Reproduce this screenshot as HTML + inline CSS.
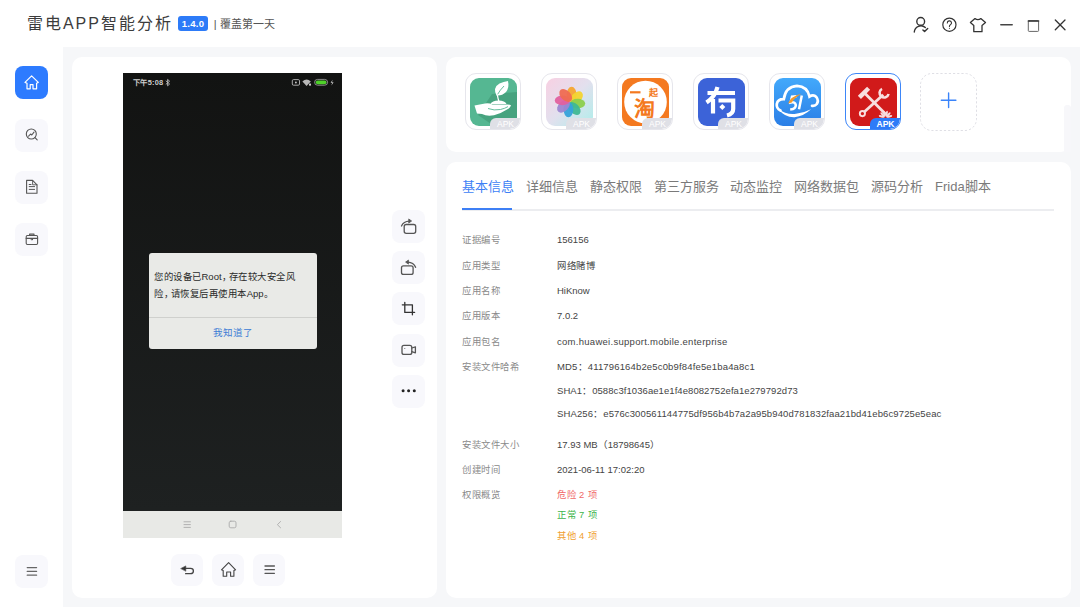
<!DOCTYPE html>
<html lang="zh-CN"><head><meta charset="utf-8">
<style>
*{box-sizing:border-box;margin:0;padding:0}
html,body{width:1080px;height:607px;overflow:hidden;background:#fff;font-family:"Liberation Sans",sans-serif;color:#333}
.abs{position:absolute}
#title{left:27px;top:13px;font-size:16px;letter-spacing:1.95px;color:#3c3c3c;line-height:22px;white-space:nowrap}
#badge{left:178px;top:16.4px;width:30px;height:15px;background:#2d7bf8;border-radius:3px;color:#fff;font-size:9.5px;font-weight:bold;letter-spacing:0.3px;line-height:15px;text-align:center}
#sub{left:213.8px;top:16px;font-size:11px;color:#555;line-height:16px;white-space:nowrap}
#bg{left:63px;top:47px;width:1017px;height:560px;background:#f6f7f9}
.panel{background:#fff;border-radius:10px}
.sb{left:15px;width:33px;height:33px;border-radius:8px;background:#f8f8fc}
.sb svg{position:absolute;left:0;top:0}
.tb{left:392px;width:33px;height:33px;border-radius:8px;background:#f8f8fc}
.tb svg,.bb svg{position:absolute;left:0;top:0}
.bb{top:554px;width:32px;height:32px;border-radius:8px;background:#f8f8fc}
.card{top:73px;width:56px;height:57px;border:1px solid #e6e6ec;border-radius:11px;background:#fff;overflow:hidden}
.icon{position:absolute;left:4px;top:4px;width:47px;height:48px;border-radius:9px;overflow:hidden}
.apk{position:absolute;right:0;bottom:0;width:30px;height:11.5px;background:#dfe0e6;border-radius:6px 0 10px 0;color:#fff;font-size:8.5px;line-height:12px;text-align:center;padding-left:1px}
.tab{top:178px;font-size:13px;color:#7a7a7a;line-height:18px;white-space:nowrap}
.lab{left:462px;font-size:9.4px;letter-spacing:0.5px;color:#8a8a8a;line-height:12px;white-space:nowrap}
.val{left:557px;font-size:9.5px;color:#444;line-height:12px;white-space:nowrap}
</style></head><body>
<div id="title" class="abs">雷电APP智能分析</div>
<div id="badge" class="abs">1.4.0</div>
<div id="sub" class="abs">|&nbsp;覆盖第一天</div>

<div id="bg" class="abs"></div>
<div class="abs panel" style="left:72px;top:57px;width:365px;height:541px"></div>
<div class="abs panel" style="left:446px;top:57px;width:625px;height:95px"></div>
<div class="abs panel" style="left:446px;top:162px;width:625px;height:436px"></div>

<div class="abs" style="left:1064px;top:105px;width:7px;height:47px;background:#f7f7fa;border-radius:3px 3px 0 0"></div>
<!-- sidebar -->
<div class="abs sb" style="top:66px;background:#2d7bff"></div>
<div class="abs sb" style="top:119px"></div>
<div class="abs sb" style="top:171px"></div>
<div class="abs sb" style="top:223px"></div>
<div class="abs sb" style="top:555px"></div>

<!-- phone -->
<div class="abs" style="left:123px;top:73px;width:219px;height:438px;background:linear-gradient(#121312,#1e2121)"></div>
<div class="abs" style="left:123px;top:511px;width:219px;height:27px;background:#e8e9e6"></div>
<div class="abs" style="left:148.5px;top:253px;width:168px;height:96px;background:#e9eae7;border-radius:3px"></div>


<div class="abs" style="left:133.3px;top:77.5px;font-size:7.4px;font-weight:bold;color:#cfcfcf;line-height:10px;white-space:nowrap;letter-spacing:0.2px">下午5:08</div>
<svg class="abs" style="left:0;top:0" width="1080" height="607" viewBox="0 0 1080 607" fill="none">
<path d="M165.8 80.8 L169.6 84 L167.6 85.8 V79.4 L169.6 81.2 L165.8 84.4" stroke="#bbb" stroke-width="0.9"/>
<rect x="292.3" y="79.6" width="7.2" height="5.6" rx="1.2" stroke="#bbb" stroke-width="0.9"/>
<circle cx="295.9" cy="82.5" r="0.9" fill="#ccc"/>
<path d="M302.4 81.4 Q306.6 77.4 310.8 81.4 L306.6 86 Z" fill="#b8b8b8"/>
<rect x="309" y="83.6" width="2" height="2" fill="#ccc"/>
<rect x="314.6" y="79.4" width="13" height="5.8" rx="2.9" stroke="#aaa" stroke-width="0.8"/>
<rect x="315.8" y="80.4" width="10.6" height="3.8" rx="1.9" fill="#4fd12a"/>
<path d="M332.6 79.8 L330.6 82.8 H332.2 L331.4 85.4 L333.6 82.2 H332 Z" fill="#ccc"/>
</svg>
<div class="abs" style="left:154px;top:268.4px;width:170px;font-size:9.4px;letter-spacing:0.5px;color:#2a2a2a;line-height:17px;white-space:nowrap">您的设备已<span style="font-size:9.5px;letter-spacing:0">Root</span><span style="letter-spacing:-1.8px">，</span>存在较大安全风<br>险<span style="letter-spacing:-1.8px">，</span>请恢复后再使用本<span style="font-size:9.5px;letter-spacing:0">App</span>。</div>
<div class="abs" style="left:148.5px;top:317px;width:168px;height:1px;background:#cfd0cd"></div>
<div class="abs" style="left:148.5px;top:326px;width:168px;text-align:center;font-size:9.5px;color:#3a7bd5;line-height:14px">我知道了</div>

<!-- tool buttons -->
<div class="abs tb" style="top:210px"></div>
<div class="abs tb" style="top:251px"></div>
<div class="abs tb" style="top:292px"></div>
<div class="abs tb" style="top:334px"></div>
<div class="abs tb" style="top:375px"></div>

<div class="abs bb" style="left:171px"></div>
<div class="abs bb" style="left:212px"></div>
<div class="abs bb" style="left:253px"></div>

<!-- app cards -->
<div class="abs card" style="left:465px"><div class="icon">
<svg width="47" height="48" viewBox="0 0 47 48">
<rect width="47" height="48" fill="#55b792"/>
<path d="M22 16 L47 14 V48 H24 L8 37 Z" fill="#47a37f"/>
<path d="M26.5 17.5 Q22.5 9.5 29.5 5.5 Q33.5 3.5 38 3 Q39.5 9.5 36 14 Q32 18 26.5 17.5 Z" fill="#fff"/>
<path d="M27.5 16.5 Q30 12 34 8" stroke="#55b792" stroke-width="0.9" fill="none"/>
<path d="M27.3 16.5 Q27.8 20 28.8 23" stroke="#fff" stroke-width="1.3" fill="none"/>
<path d="M20.5 26 Q22 22.5 28.5 22.5 Q35 22.5 36.5 26 Z" fill="#fff"/>
<path d="M4.5 27.5 L15 25.5 Q19 24.8 22.5 26.5 L36 26.5 Q39.5 26.3 41 27.2 Q40.5 29.5 37 31.5 Q31 35.5 24 37.2 Q17 38.5 12 36 L7 35.5 Z" fill="#fff"/>
<path d="M18 30.5 Q24 32.8 30.5 31.5 Q35 30.5 38 28.6" stroke="#55b792" stroke-width="0.9" fill="none"/>
</svg></div><div class="apk">APK</div></div>
<div class="abs card" style="left:541px"><div class="icon">
<svg width="47" height="48" viewBox="0 0 47 48">
<defs><linearGradient id="g2" x1="0" y1="0" x2="1" y2="1"><stop offset="0" stop-color="#f8d0e2"/><stop offset="0.5" stop-color="#e2e0ee"/><stop offset="1" stop-color="#aeeeea"/></linearGradient></defs>
<rect width="47" height="48" fill="url(#g2)"/>
<g transform="translate(24 24)"><ellipse cx="1.6" cy="-7.6" rx="4.9" ry="7.6" fill="#f6a531" opacity="0.95" transform="rotate(0)"/><ellipse cx="1.6" cy="-7.6" rx="4.9" ry="7.6" fill="#f3d42f" opacity="0.95" transform="rotate(45)"/><ellipse cx="1.6" cy="-7.6" rx="4.9" ry="7.6" fill="#8ccf4d" opacity="0.95" transform="rotate(90)"/><ellipse cx="1.6" cy="-7.6" rx="4.9" ry="7.6" fill="#3fb894" opacity="0.95" transform="rotate(135)"/><ellipse cx="1.6" cy="-7.6" rx="4.9" ry="7.6" fill="#36a2da" opacity="0.95" transform="rotate(180)"/><ellipse cx="1.6" cy="-7.6" rx="4.9" ry="7.6" fill="#9c86d2" opacity="0.95" transform="rotate(225)"/><ellipse cx="1.6" cy="-7.6" rx="4.9" ry="7.6" fill="#e2609f" opacity="0.95" transform="rotate(270)"/><ellipse cx="1.6" cy="-7.6" rx="4.9" ry="7.6" fill="#ef6b52" opacity="0.95" transform="rotate(315)"/></g>
</svg></div><div class="apk">APK</div></div>
<div class="abs card" style="left:617px"><div class="icon">
<svg width="47" height="48" viewBox="0 0 47 48">
<rect width="47" height="48" fill="#f47920"/>
<circle cx="23.5" cy="24" r="21.3" fill="#fff"/>
<rect x="8" y="13.2" width="10.5" height="2.2" fill="#f47920"/>
<text x="31" y="17.5" font-size="9" font-weight="bold" fill="#f47920" text-anchor="middle">起</text>
<text x="22" y="37.5" font-size="21" font-weight="bold" fill="#f47920" text-anchor="middle">淘</text>
</svg></div><div class="apk">APK</div></div>
<div class="abs card" style="left:693px"><div class="icon">
<svg width="47" height="48" viewBox="0 0 47 48">
<rect width="47" height="48" fill="#3c63d8"/>
<path d="M9.5 15 H37" stroke="#fff" stroke-width="4.2"/>
<path d="M19.5 9 Q17 19 8.5 24.5" stroke="#fff" stroke-width="4.2" fill="none"/>
<path d="M15 21 V35.5" stroke="#fff" stroke-width="4.2"/>
<path d="M20.5 22.5 H35.2 V31 Q35.2 36 29 37.5" stroke="#fff" stroke-width="4.2" fill="none"/>
<path d="M24.3 26 L27.3 29 L24.3 32 L21.3 29 Z" fill="#fff"/>
</svg></div><div class="apk">APK</div></div>
<div class="abs card" style="left:769px"><div class="icon">
<svg width="47" height="48" viewBox="0 0 47 48">
<defs><linearGradient id="g5" x1="0" y1="0" x2="0" y2="1"><stop offset="0" stop-color="#43a9fb"/><stop offset="1" stop-color="#2b7ee6"/></linearGradient></defs>
<rect width="47" height="48" fill="url(#g5)"/>
<path d="M6.5 32.5 Q2.2 30.5 2.8 26 Q3.8 21 9.8 21.2 Q11.5 8.5 23 7.8 Q33.5 8.3 35.5 18.6 Q39.5 16 42.3 19 Q45 22.5 42.8 26 Q41 28.3 38 27.8" stroke="#fff" stroke-width="2.7" fill="none" stroke-linecap="round"/>
<path d="M4.5 31 Q12 37 22 35.8 Q30 34.8 37 31.2 Q30 38 20.5 39.2 Q10.5 39.5 4.5 31 Z" fill="#fff"/>
<path d="M22.5 18.2 L18 18.6 L16.6 24.6 Q21.2 23.4 21.8 27 Q22 31 16.2 31.6 M27.8 17.4 L25 31.2" stroke="#fff" stroke-width="2.5" fill="none"/>
<path d="M14 25.5 Q16.5 18.5 27.5 15.8 Q20.5 19.8 17.8 24.6 Z" fill="#f39a2d"/>
</svg></div><div class="apk">APK</div></div>
<div class="abs card" style="left:845px;border-color:#3d86f8"><div class="icon">
<svg width="47" height="48" viewBox="0 0 47 48">
<rect width="47" height="48" fill="#d11a1a"/>
<g stroke="#f8dede" fill="none" stroke-linecap="butt">
<path d="M14.5 15 L36 36.5" stroke-width="2.8"/>
<rect x="-6.5" y="-2.2" width="13" height="4.4" fill="#f8dede" stroke="none" transform="translate(14 14.8) rotate(-45)"/>
<path d="M33.2 16.8 L14.2 34" stroke-width="2.8"/>
<circle cx="12.4" cy="35.6" r="2.6" stroke-width="1.9" fill="#d11a1a"/>
<path d="M32 10.8 A4.6 4.6 0 1 0 38.6 16" stroke-width="2.6"/>
</g>
<g fill="#f8dede" transform="translate(35.5 39.5)">
<ellipse cx="0" cy="-4" rx="1.1" ry="3" transform="rotate(-75)"/>
<ellipse cx="0" cy="-4" rx="1.1" ry="3" transform="rotate(-45)"/>
<ellipse cx="0" cy="-4" rx="1.1" ry="3" transform="rotate(-15)"/>
<ellipse cx="0" cy="-4" rx="1.1" ry="3" transform="rotate(15)"/>
<ellipse cx="0" cy="-4" rx="1.1" ry="3" transform="rotate(45)"/>
<ellipse cx="0" cy="-4" rx="1.1" ry="3" transform="rotate(75)"/>
</g>
</svg></div><div class="apk" style="background:#2d7bf8;font-weight:bold">APK</div></div>
<svg class="abs" style="left:920px;top:73px" width="57" height="58"><rect x="0.5" y="0.5" width="56" height="57" rx="11.5" fill="none" stroke="#dfdfe5" stroke-width="1" stroke-dasharray="2.2 2"/></svg>

<!-- tabs -->
<div class="abs tab" style="left:462px;color:#3d7ff5">基本信息</div>
<div class="abs tab" style="left:526px">详细信息</div>
<div class="abs tab" style="left:590px">静态权限</div>
<div class="abs tab" style="left:654px">第三方服务</div>
<div class="abs tab" style="left:730px">动态监控</div>
<div class="abs tab" style="left:794px">网络数据包</div>
<div class="abs tab" style="left:871px">源码分析</div>
<div class="abs tab" style="left:935px">Frida脚本</div>
<div class="abs" style="left:462px;top:209px;width:592px;height:1.5px;background:#ecedf0"></div>
<div class="abs" style="left:462px;top:208.3px;width:50px;height:2.2px;background:#3d7ff5"></div>

<!-- info -->
<div class="abs lab" style="top:234px">证据编号</div><div class="abs val" style="top:234px">156156</div>
<div class="abs lab" style="top:260px">应用类型</div><div class="abs val" style="top:260px;font-size:9.4px;letter-spacing:0.5px">网络赌博</div>
<div class="abs lab" style="top:285px">应用名称</div><div class="abs val" style="top:285px">HiKnow</div>
<div class="abs lab" style="top:310px">应用版本</div><div class="abs val" style="top:310px">7.0.2</div>
<div class="abs lab" style="top:336px">应用包名</div><div class="abs val" style="top:336px;letter-spacing:0.28px">com.huawei.support.mobile.enterprise</div>
<div class="abs lab" style="top:361px">安装文件哈希</div><div class="abs val" style="top:361px;letter-spacing:0.16px">MD5：411796164b2e5c0b9f84fe5e1ba4a8c1</div>
<div class="abs val" style="top:385px;letter-spacing:0.07px">SHA1：0588c3f1036ae1e1f4e8082752efa1e279792d73</div>
<div class="abs val" style="top:408px;letter-spacing:0.12px">SHA256：e576c300561144775df956b4b7a2a95b940d781832faa21bd41eb6c9725e5eac</div>
<div class="abs lab" style="top:439px">安装文件大小</div><div class="abs val" style="top:439px">17.93 MB（18798645）</div>
<div class="abs lab" style="top:464px">创建时间</div><div class="abs val" style="top:464px">2021-06-11 17:02:20</div>
<div class="abs lab" style="top:489px">权限概览</div><div class="abs val" style="top:489px;color:#f06868;font-size:9.4px;letter-spacing:0.5px">危险 2 项</div>
<div class="abs val" style="top:509px;color:#3cb44b;font-size:9.4px;letter-spacing:0.5px">正常 7 项</div>
<div class="abs val" style="top:530px;color:#f0a030;font-size:9.4px;letter-spacing:0.5px">其他 4 项</div>

<svg class="abs" style="left:0;top:0" width="1080" height="607" viewBox="0 0 1080 607" fill="none" stroke-linecap="round" stroke-linejoin="round">
<!-- header icons -->
<g stroke="#333" stroke-width="1.4">
<circle cx="920.7" cy="21.4" r="3.9"/>
<path d="M914.3 32 A6.6 6.6 0 0 1 925.3 27.6"/>
<path d="M922.9 29.9 L924.6 31.6 L927.7 28.5"/>
<circle cx="949.4" cy="24.7" r="6.6" stroke-width="1.2"/>
<path d="M947.3 23 A2.1 2.1 0 1 1 950.4 24.8 Q949.4 25.4 949.4 26.6" stroke-width="1.1"/>
<circle cx="949.4" cy="28.6" r="0.5" fill="#333" stroke="none"/>
<path d="M975 18.6 Q977.9 20.6 980.8 18.6 L985.5 22.6 L982 25.4 V31.7 H973.8 V25.4 L970.4 22.6 Z" stroke-width="1.3"/>
<path d="M1000.8 24.8 H1012.2" stroke="#444" stroke-width="1.5"/>
<rect x="1028.3" y="20.8" width="10.3" height="10.6" rx="0.8" stroke="#666" stroke-width="1"/>
<path d="M1028.3 21 H1038.6" stroke="#333" stroke-width="1.5"/>
<path d="M1055.3 20 L1065 29.8 M1065 20 L1055.3 29.8" stroke-width="1.3"/>
</g>
<!-- sidebar icons -->
<path d="M27 83.2 L25 82.4 L31.6 75.9 L38.3 82.4 L36.6 83.2 V88.8 H33 V84.6 H30.2 V88.8 H27 Z" stroke="#fff" stroke-width="1.2"/>
<g stroke="#555" stroke-width="1.1">
<circle cx="31.3" cy="134" r="5"/>
<path d="M35 137.7 L37.2 139.8"/>
<path d="M28.6 136.2 L30.6 134 L31.8 135 L34 132.2"/>
<path d="M26.6 180.4 H32.6 L37 184.8 V193.2 H26.6 Z"/>
<path d="M32.6 180.4 V184.8 H37" stroke-width="0.9"/>
<path d="M29.2 184.5 H31 M29.2 186.6 H34.6 M29.2 189.4 H34.6" stroke-width="1"/>
<rect x="26.2" y="235.5" width="11.4" height="9" rx="1.2"/>
<path d="M29.6 235.3 V234.1 H34 V235.3"/>
<path d="M26.2 238.4 H37.6"/>
<path d="M30.6 238.8 L31.9 240.2 L33.2 238.8" stroke-width="1"/>
<path d="M27.2 567.6 H36.6 M27.2 571.4 H36.6 M27.2 575.2 H36.6" stroke="#666" stroke-width="1.2"/>
</g>
<!-- tool icons -->
<g stroke="#555" stroke-width="1.3">
<rect x="404.2" y="224.5" width="11.5" height="8.8" rx="2"/>
<path d="M401.5 226 Q403.5 221.3 409.3 221.1"/>
<path d="M409 219.2 L411.6 221 L409 222.8 Z" fill="#555" stroke-width="0.8"/>
<rect x="401.5" y="265.8" width="11.6" height="8.6" rx="2"/>
<path d="M415.6 267.3 Q413.6 262.4 407.8 262.1"/>
<path d="M408.2 260.3 L405.6 262.1 L408.2 263.9 Z" fill="#555" stroke-width="0.8"/>
<path d="M404.8 302.3 V312.4 H414.6 M402.3 304.8 H412.4 V314.8" stroke="#333"/>
<rect x="402" y="345.4" width="9.8" height="9" rx="2"/>
<path d="M411.8 348 L415.4 346.8 V352.8 L411.8 351.6"/>
<circle cx="404.8" cy="348.4" r="0.5" fill="#555" stroke="none"/>
</g>
<g fill="#222">
<circle cx="403.1" cy="390.8" r="1.5"/><circle cx="408.6" cy="390.8" r="1.5"/><circle cx="414.3" cy="390.8" r="1.5"/>
</g>
<!-- bottom nav buttons -->
<g stroke="#444" stroke-width="1.3">
<path d="M185.6 568.4 H190.5 Q193.4 568.4 193.4 571 Q193.4 573.7 190.5 573.7 H185.6"/>
<path d="M181 568.4 L185.8 565.9 V570.9 Z" fill="#333" stroke-width="0.6"/>
<path d="M223.2 570.6 L221.5 569.8 L228.6 562.7 L235.6 569.8 L233.9 570.6 V576.3 H230.6 V572 H226.7 V576.3 H223.2 Z" stroke-width="1.1"/>
<path d="M265 566 H274.4 M265 569.7 H274.4 M265 573.3 H274.4" stroke="#555"/>
</g>
<!-- phone nav -->
<g stroke="#aaa" stroke-width="0.9" fill="none">
<path d="M184 521.8 H190.4 M184 524.6 H190.4 M184 527.4 H190.4"/>
<rect x="229.2" y="521.2" width="6.8" height="6.6" rx="1.6"/>
<path d="M280.6 521.5 L277.4 524.7 L280.6 527.8"/>
</g>
<!-- plus -->
<path d="M948.6 93 V107.6 M941.3 100.3 H955.9" stroke="#3a84fa" stroke-width="1.4"/>
</svg>
</body></html>
